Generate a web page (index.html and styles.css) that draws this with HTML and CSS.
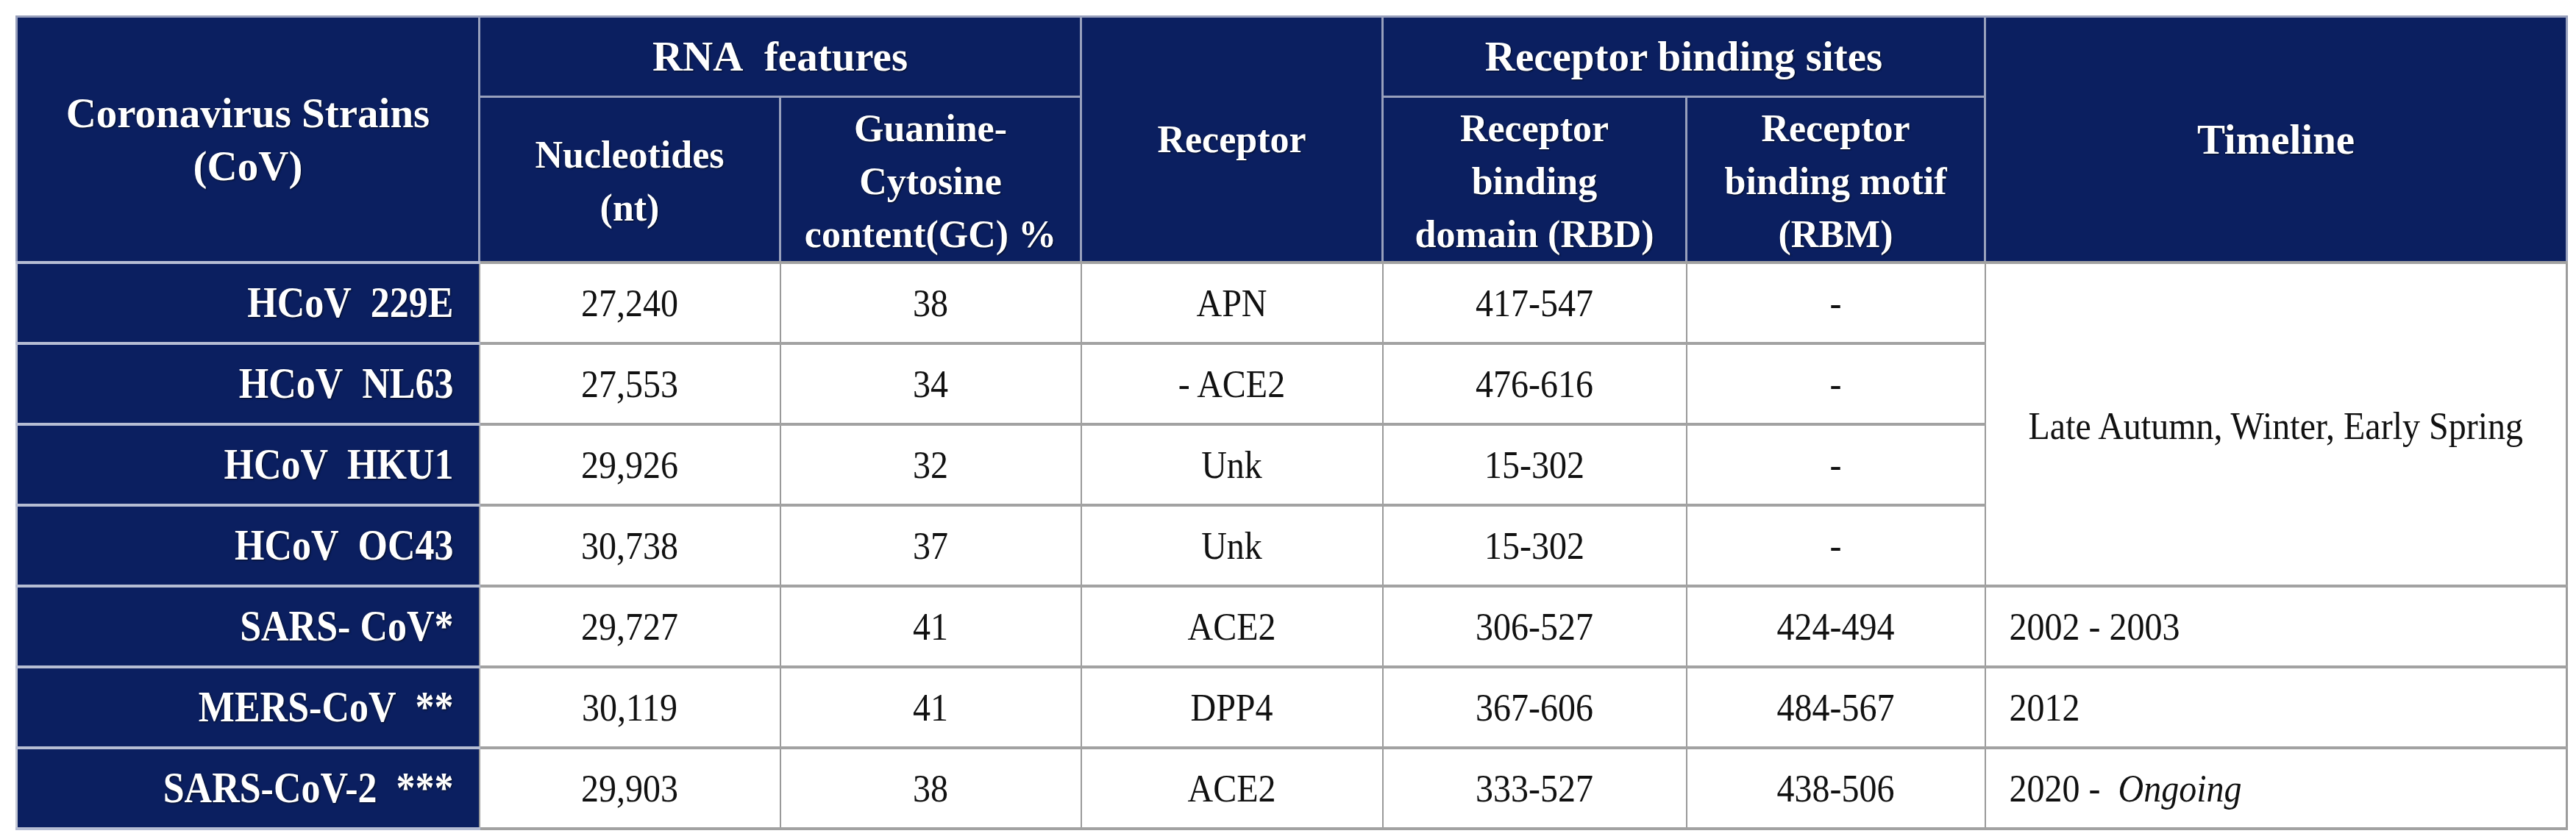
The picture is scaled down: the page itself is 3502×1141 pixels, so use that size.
FILE: index.html
```html
<!DOCTYPE html>
<html>
<head>
<meta charset="utf-8">
<link rel="stylesheet" href="styles.css">
</head>
<body>
<div class="page">
<table class="cov">
<colgroup>
<col class="c-strain"><col class="c-nt"><col class="c-gc"><col class="c-rec"><col class="c-rbd"><col class="c-rbm"><col class="c-time">
</colgroup>
<thead>
<tr class="h1">
<th rowspan="2" class="big">Coronavirus Strains<br>(CoV)</th>
<th colspan="2" class="big">RNA&nbsp; features</th>
<th rowspan="2">Receptor</th>
<th colspan="2" class="big">Receptor binding sites</th>
<th rowspan="2" class="big">Timeline</th>
</tr>
<tr class="h2">
<th>Nucleotides<br>(nt)</th>
<th>Guanine-<br>Cytosine<br>content(GC) %</th>
<th>Receptor<br>binding<br>domain (RBD)</th>
<th>Receptor<br>binding motif<br>(RBM)</th>
</tr>
</thead>
<tbody>
<tr>
<th class="strain"><span class="s">HCoV&nbsp; 229E</span></th>
<td><span class="s">27,240</span></td>
<td><span class="s">38</span></td>
<td><span class="s">APN</span></td>
<td><span class="s">417-547</span></td>
<td><span class="s">-</span></td>
<td rowspan="4" class="season"><span class="s">Late Autumn, Winter, Early Spring</span></td>
</tr>
<tr>
<th class="strain"><span class="s">HCoV&nbsp; NL63</span></th>
<td><span class="s">27,553</span></td>
<td><span class="s">34</span></td>
<td><span class="s">- ACE2</span></td>
<td><span class="s">476-616</span></td>
<td><span class="s">-</span></td>
</tr>
<tr>
<th class="strain"><span class="s">HCoV&nbsp; HKU1</span></th>
<td><span class="s">29,926</span></td>
<td><span class="s">32</span></td>
<td><span class="s">Unk</span></td>
<td><span class="s">15-302</span></td>
<td><span class="s">-</span></td>
</tr>
<tr>
<th class="strain"><span class="s">HCoV&nbsp; OC43</span></th>
<td><span class="s">30,738</span></td>
<td><span class="s">37</span></td>
<td><span class="s">Unk</span></td>
<td><span class="s">15-302</span></td>
<td><span class="s">-</span></td>
</tr>
<tr>
<th class="strain"><span class="s">SARS- CoV*</span></th>
<td><span class="s">29,727</span></td>
<td><span class="s">41</span></td>
<td><span class="s">ACE2</span></td>
<td><span class="s">306-527</span></td>
<td><span class="s">424-494</span></td>
<td class="year"><span class="s">2002 - 2003</span></td>
</tr>
<tr>
<th class="strain"><span class="s">MERS-CoV&nbsp; **</span></th>
<td><span class="s">30,119</span></td>
<td><span class="s">41</span></td>
<td><span class="s">DPP4</span></td>
<td><span class="s">367-606</span></td>
<td><span class="s">484-567</span></td>
<td class="year"><span class="s">2012</span></td>
</tr>
<tr>
<th class="strain"><span class="s">SARS-CoV-2&nbsp; ***</span></th>
<td><span class="s">29,903</span></td>
<td><span class="s">38</span></td>
<td><span class="s">ACE2</span></td>
<td><span class="s">333-527</span></td>
<td><span class="s">438-506</span></td>
<td class="year"><span class="s">2020 -&nbsp; <em>Ongoing</em></span></td>
</tr>
</tbody>
</table>
</div>
</body>
</html>
```

FILE: styles.css
```css
html, body {
  margin: 0;
  padding: 0;
  background: #ffffff;
}

.page {
  padding: 21px 0 0 21px;
}

.cov {
  border-collapse: collapse;
  table-layout: fixed;
  width: 3467px;
  font-family: "Liberation Serif", "Times New Roman", serif;
  border-top: 3px solid #c4c8d4;
  border-left: 3px solid #c4c8d4;
  border-right: 3px solid #9c9c9c;
  border-bottom: 3px solid #9c9c9c;
}

.c-strain { width: 629px; }
.c-nt { width: 409px; }
.c-gc { width: 409px; }
.c-rec { width: 410px; }
.c-rbd { width: 413px; }
.c-rbm { width: 406px; }
.c-time { width: 791px; }

.cov thead th {
  background: #0b1f60;
  color: #ffffff;
  font-weight: bold;
  font-size: 52px;
  line-height: 72px;
  text-align: center;
  vertical-align: middle;
  border: 3px solid #98a0bc;
  padding: 0;
  text-shadow: 1px 1px 2px rgba(0, 0, 0, 0.7);
}

.cov thead th.big {
  font-size: 57px;
}

.cov thead tr.h1 {
  height: 109px;
}

.cov thead tr.h2 {
  height: 222px;
}

.cov thead tr.h2 th {
  padding-top: 6px;
}

.cov tbody tr {
  height: 110px;
}

.cov tbody td {
  background: #ffffff;
  color: #111111;
  font-size: 48px;
  line-height: 60px;
  text-align: center;
  vertical-align: middle;
  padding: 0;
  border-top: 4px solid #a2a2a2;
  border-bottom: 4px solid #a2a2a2;
  border-left: 2px solid #9a9a9a;
  border-right: 2px solid #9a9a9a;
}

.cov tbody th.strain {
  background: #0b1f60;
  color: #ffffff;
  font-size: 52px;
  line-height: 60px;
  font-weight: bold;
  text-align: right;
  vertical-align: middle;
  padding: 0 34px 0 0;
  border-top: 4px solid #b6bdd3;
  border-bottom: 4px solid #b6bdd3;
  border-left: 3px solid #c4c8d4;
  border-right: 2px solid #9a9a9a;
  text-shadow: 1px 1px 2px rgba(0, 0, 0, 0.7);
}

.s {
  display: inline-block;
  transform: scaleY(1.12);
  white-space: nowrap;
}

.cov tbody td.year {
  text-align: left;
  padding-left: 32px;
}

.cov tbody td.season {
  padding-top: 4px;
}

.cov em {
  font-style: italic;
}
```
